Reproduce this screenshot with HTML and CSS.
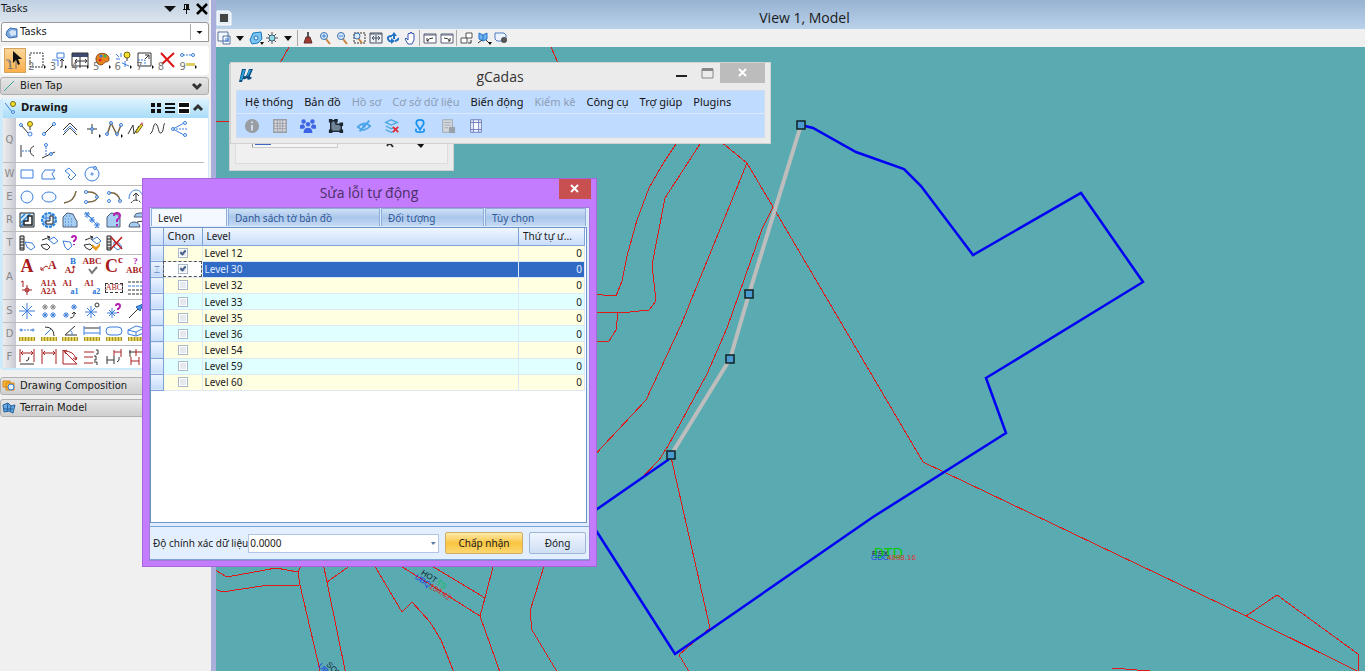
FILE: index.html
```
<!DOCTYPE html>
<html lang="vi">
<head>
<meta charset="utf-8">
<title>View 1, Model</title>
<link rel="stylesheet" href="styles.css">
</head>
<body>
<aside class="tasks">
  <header class="tasks-head"><span>Tasks</span>
    <button aria-label="Menu"><svg class="i12" viewBox="0 0 12 12"><path d="M0 3h12L6 9z"/></svg></button>
    <button aria-label="Pin"><svg class="i12" viewBox="0 0 12 12"><path d="M4 1h5v5h1v1H7v4H6V7H3V6h1zM5 2v4h1V2z"/></svg></button>
    <button aria-label="Close"><svg class="i12" viewBox="0 0 12 12"><path class="x" d="M1 1l10 10M11 1L1 11"/></svg></button>
  </header>
  <div class="combo">
    <svg class="i16" viewBox="0 0 16 16"><path fill="#7ba7dc" stroke="#3f70b5" d="M3 7l3-3 7 1v8l-8 1-3-3z"/><path fill="#d5e5f8" d="M5 8l3-2 4 1v4l-5 1z"/></svg>
    <select aria-label="Tasks"><option>Tasks</option></select>
    <svg class="i16 drop" viewBox="0 0 16 16"><path d="M5 7h6l-3 3z"/></svg>
  </div>
  <div class="main-tools">
    <button class="on" aria-label="Select"><svg viewBox="0 0 20 20"><path fill="#111" d="M8 0v12l3-3 2 5 2-1-2-5h4z"/><path class="g" d="M11 10v8M1 9h4v7"/></svg><i>1</i></button>
    <button aria-label="Fence"><svg viewBox="0 0 20 20"><path class="k" stroke-dasharray="2 1" d="M3 2h13v14H3z"/><path d="M17 14v4l2-2z"/></svg><i>2</i></button>
    <button aria-label="Copy"><svg viewBox="0 0 20 20"><path class="b" d="M9 2h7v5H9zM4 9h6v6"/><path class="k" d="M12 16h2V8m-2 2l2-2 2 2"/><path d="M17 14v4l2-2z"/></svg><i>3</i></button>
    <button aria-label="View"><svg viewBox="0 0 20 20"><path fill="#3c4b70" d="M2 2h16v4H2z"/><path class="k" d="M2 2h16v13H2zM5 10h12M10 5v12M7 8l-2 2 2 2M15 8l2 2-2 2"/><path d="M17 14v4l2-2z"/></svg><i>4</i></button>
    <button aria-label="Colors"><svg viewBox="0 0 20 20"><path fill="#e6831e" stroke="#8b4510" d="M4 8c0-8 13-7 13 0 0 4-4 2-5 4-1 3-8 3-8-4z"/><circle cx="9" cy="5" r="1.5" fill="#2b7ade"/><circle cx="13" cy="5" r="1.5" fill="#3fb54a"/><circle cx="8" cy="9" r="1.5" fill="#d22"/><path d="M17 14v4l2-2z"/></svg><i>5</i></button>
    <button aria-label="Snap"><svg viewBox="0 0 20 20"><path class="b" d="M3 3l3 3M8 2v4M3 8h4M9 12l7 3M12 10v6"/><circle cx="14" cy="4" r="3" fill="#f6df2a" stroke="#776a10"/><path class="k" d="M14 7v3"/><path d="M17 14v4l2-2z"/></svg><i>6</i></button>
    <button aria-label="Scale"><svg viewBox="0 0 20 20"><path class="k" d="M3 2h13v13H3zM10 8l4-4M10 4h4v4"/><path class="b" stroke-dasharray="2 1" d="M3 9h7v6"/><path d="M17 14v4l2-2z"/></svg><i>7</i></button>
    <button aria-label="Delete"><svg viewBox="0 0 20 20"><path stroke="#df1414" stroke-width="2" d="M4 2l13 14M17 2L5 13"/></svg><i>8</i></button>
    <button aria-label="Measure"><svg viewBox="0 0 20 20"><path class="b" stroke-dasharray="2 1" d="M5 4h9"/><circle class="b" cx="4" cy="4" r="1.5"/><circle class="b" cx="15" cy="4" r="1.5"/><path fill="#dfcf62" d="M8 12h9v3H8z"/><path d="M17 14v4l2-2z"/></svg><i>9</i></button>
  </div>
  <button class="group"><svg class="i16" viewBox="0 0 16 16"><path stroke="#3da59b" d="M3 13L13 3"/></svg><span>Bien Tap</span><svg class="i12" viewBox="0 0 12 12"><path class="chev" d="M2 4l4 4 4-4"/></svg></button>
  <section class="drawing">
    <div class="drawing-head"><svg class="i16" viewBox="0 0 16 16"><path class="b" d="M2 3l7 9"/><circle class="b" cx="10" cy="12" r="1.5"/><circle cx="10" cy="4" r="2.5" fill="#f6df2a" stroke="#776a10"/></svg><strong>Drawing</strong>
      <svg class="i12" viewBox="0 0 12 12"><path d="M1 1h4v4H1zM7 1h4v4H7zM1 7h4v4H1zM7 7h4v4H7z"/></svg>
      <svg class="i12" viewBox="0 0 12 12"><path d="M1 1h10v2H1zM1 5h10v2H1zM1 9h10v2H1z"/></svg>
      <svg class="i12 sel" viewBox="0 0 12 12"><path d="M1 1h10v4H1zM1 7h10v4H1z"/></svg>
      <svg class="i12" viewBox="0 0 12 12"><path class="chev" d="M2 8l4-4 4 4"/></svg></div>
    <div class="row"><b>Q</b><div class="grid">
      <button aria-label="Smart line"><svg viewBox="0 0 18 18"><path class="k" d="M3 5l7 8"/><circle class="b" cx="3" cy="5" r="1.5"/><circle class="b" cx="12" cy="14" r="2"/><circle cx="12" cy="4" r="2.5" fill="#f6df2a" stroke="#776a10"/><path class="k" d="M12 7v3"/></svg></button>
      <button aria-label="Line"><svg viewBox="0 0 18 18"><path class="k" d="M5 13l8-8"/><circle class="b" cx="4" cy="14" r="1.5"/><circle class="b" cx="14" cy="4" r="1.5"/></svg></button>
      <button aria-label="Multi-line"><svg viewBox="0 0 18 18"><path class="k" d="M2 10l7-7 7 7M2 15l7-7 7 7"/><path class="b" d="M3 12l6-6 6 6"/></svg></button>
      <button aria-label="Point"><svg viewBox="0 0 18 18"><path class="k" d="M4 9h10M9 4v10"/><circle class="b" cx="9" cy="9" r="1.5"/><path d="M16 14v4l2-2z"/></svg></button>
      <button aria-label="Curve"><svg viewBox="0 0 18 18"><path class="n" d="M2 15l4-12 6 12 4-10"/><circle class="b" cx="2" cy="14" r="1.5"/><circle class="b" cx="6" cy="3" r="1.5"/><circle class="b" cx="12" cy="14" r="1.5"/><circle class="b" cx="16" cy="5" r="1.5"/><path d="M16 14v4l2-2z"/></svg></button>
      <button aria-label="Sketch"><svg viewBox="0 0 18 18"><path class="k" d="M1 14l5-9 1 9 5-8"/><path fill="#f1de33" stroke="#77671b" d="M9 11l5-7 2 1-5 7-2 1z"/><path stroke="#d47a9b" stroke-width="2" d="M14 3l2 1"/></svg></button>
      <button aria-label="Stream curve"><svg viewBox="0 0 18 18"><path class="k" d="M2 14C6 12 5 2 8 4s2 10 5 9 2-9 4-10"/></svg></button>
      <button aria-label="Bisector"><svg viewBox="0 0 18 18"><path class="b" d="M3 9l11-6M3 9l11 6"/><path class="b" stroke-dasharray="2 1" d="M3 9h14"/><circle class="b" cx="3" cy="9" r="1.5"/><circle class="b" cx="15" cy="3" r="1.5"/><circle class="b" cx="15" cy="15" r="1.5"/></svg></button>
      <button aria-label="Minimum line"><svg viewBox="0 0 18 18"><path class="k" d="M3 3v12M16 4c-5 2-5 8 0 10"/><path class="b" stroke-dasharray="2 1" d="M4 9h8"/></svg></button>
      <button aria-label="Angle line"><svg viewBox="0 0 18 18"><path class="k" d="M2 16l13-6"/><path class="b" stroke-dasharray="2 1" d="M6 5v9"/><circle class="b" cx="6" cy="3" r="1.5"/><circle class="b" cx="11" cy="12" r="1.5"/></svg></button>
    </div></div>
    <div class="row"><b>W</b><div class="grid">
      <button aria-label="Block"><svg viewBox="0 0 18 18"><path class="b" d="M3 5h12v8H3z"/></svg></button>
      <button aria-label="Shape"><svg viewBox="0 0 18 18"><path class="b" d="M2 14V9l3-4h10l-3 4 3 5z"/></svg></button>
      <button aria-label="Orthogonal shape"><svg viewBox="0 0 18 18"><path class="b" d="M4 6l4-3 7 7-5 5-3-3 2-2z"/></svg></button>
      <button aria-label="Polygon"><svg viewBox="0 0 18 18"><circle class="b" cx="9" cy="9" r="7"/><circle class="b" cx="9" cy="9" r="1"/><circle class="b" cx="12" cy="3" r="1.5"/></svg></button>
    </div></div>
    <div class="row"><b>E</b><div class="grid">
      <button aria-label="Circle"><svg viewBox="0 0 18 18"><circle class="b" cx="9" cy="9" r="6"/></svg></button>
      <button aria-label="Ellipse"><svg viewBox="0 0 18 18"><ellipse class="b" cx="9" cy="9" rx="7" ry="5"/></svg></button>
      <button aria-label="Arc"><svg viewBox="0 0 18 18"><path class="n" d="M3 15C10 14 14 10 15 3"/></svg></button>
      <button aria-label="Half ellipse"><svg viewBox="0 0 18 18"><path class="n" d="M4 4c14-1 14 11 0 10"/><circle class="b" cx="3" cy="4" r="1.5"/><circle class="b" cx="3" cy="14" r="1.5"/><circle class="b" cx="14" cy="9" r="1.5"/></svg></button>
      <button aria-label="Quarter ellipse"><svg viewBox="0 0 18 18"><path class="n" d="M4 5c7-1 10 3 11 8"/><circle class="b" cx="4" cy="5" r="1.5"/><circle class="b" cx="4" cy="13" r="1.5"/><circle class="b" cx="15" cy="13" r="1.5"/></svg></button>
      <button aria-label="Modify arc"><svg viewBox="0 0 18 18"><path class="b" d="M2 11c0-12 14-12 14 0"/><path class="k" d="M9 13V5M6 8l3-3 3 3"/><path class="k" stroke-dasharray="2 1" d="M4 15c2-4 8-4 10 0"/></svg></button>
    </div></div>
    <div class="row"><b>R</b><div class="grid">
      <button aria-label="Hatch area"><svg viewBox="0 0 18 18"><path fill="#cfe8fb" stroke="#222" d="M2 2h14v14H2z"/><path stroke="#2682d8" stroke-width="1.5" d="M3 7l4-4M3 12l9-9M3 15l3-3"/><path fill="#fff" stroke="#222" stroke-width="1.5" d="M6 14v-4h4V5h4v9z"/></svg></button>
      <button aria-label="Crosshatch area"><svg viewBox="0 0 18 18"><circle cx="9" cy="9" r="7" fill="#b4dcf8" stroke="#2682d8" stroke-dasharray="3 1" stroke-width="2"/><path class="b" d="M3 7h12M3 11h12M6 3v12M11 3v12"/><path fill="#fff" stroke="#222" d="M6 13v-3h4V5h3v8z"/></svg></button>
      <button aria-label="Pattern area"><svg viewBox="0 0 18 18"><path fill="#a6cdf2" stroke="#4e5e78" d="M2 16V6l4-4 6 1 3 6 1 1v6z"/><path class="b" stroke-dasharray="1 2" d="M4 8h9M4 11h9M4 14h9M5 5h6"/></svg></button>
      <button aria-label="Linear pattern"><svg viewBox="0 0 18 18"><path class="b" d="M1 3h6M4 1v6M2 1l4 5M6 1L2 6M6 9h6M9 6v6M7 6l4 5M11 6l-4 5M11 14h6M14 11v6M12 12l4 5M16 12l-4 5M5 4l8 9"/></svg></button>
      <button aria-label="Show pattern"><svg viewBox="0 0 18 18"><path fill="#a6cdf2" stroke="#4e5e78" d="M2 16V6l4-4 6 1 3 4v9z"/><path class="q" d="M9 5q0-3 3-3t3 3q0 2-3 4v2m0 2v2"/></svg></button>
      <button aria-label="Match pattern"><svg viewBox="0 0 18 18"><path fill="#a6cdf2" stroke="#4e5e78" d="M7 6q1-4 5-4h5v4zM2 16q0-5 5-5t6 5z"/><path class="k" d="M10 11l6-1V7"/></svg></button>
    </div></div>
    <div class="row"><b>T</b><div class="grid">
      <button aria-label="Attach tags"><svg viewBox="0 0 18 18"><path fill="#ddd" stroke="#222" d="M2 2h4v14H2zM2 5h4M2 8h4M2 11h4M2 14h4"/><path class="b" d="M7 8l7 1 3 4-4 3-4-3z"/></svg></button>
      <button aria-label="Edit tags"><svg viewBox="0 0 18 18"><path class="k" d="M2 6l8-3M7 2l3 1-2 3M1 11l6-1 3 3-3 3-4-2z"/><path class="b" d="M9 6l5-3 4 4-4 3z"/></svg></button>
      <button aria-label="Review tags"><svg viewBox="0 0 18 18"><path class="b" d="M2 7l7 1 2 4-4 4-3-3z"/><path class="q" d="M11 4q0-2 2-2t2 2q0 2-2 3v1m0 2v1"/></svg></button>
      <button aria-label="Change tags"><svg viewBox="0 0 18 18"><path class="k" d="M2 6l8-3M7 2l3 1-2 3M1 11l6-1 3 3-3 3-4-2z"/><path class="b" d="M9 6l5-3 4 4-4 3z"/><path fill="#e79a20" d="M9 10l4 3 4-4v3l-4 5-4-4z"/></svg></button>
      <button aria-label="Delete tags"><svg viewBox="0 0 18 18"><path fill="#ddd" stroke="#222" d="M2 2h4v14H2zM2 5h4M2 8h4M2 11h4M2 14h4"/><path class="b" d="M9 8l5 1 3 4-4 3-4-3z"/><path stroke="#c31818" stroke-width="1.5" d="M6 3l11 12M17 3L6 15"/></svg></button>
    </div></div>
    <div class="row"><b>A</b><div class="grid">
      <button class="t big">A</button>
      <button class="t" aria-label="Place note"><svg viewBox="0 0 18 18"><path class="r" d="M1 13l5-4 2 1M1 10v3h3"/><text x="8" y="12" class="glyph">A</text></svg></button>
      <button class="t"><span class="stack"><em>B</em>A⤴</span></button>
      <button class="t"><span class="stack">ABC<svg viewBox="0 0 18 9"><path stroke="#777" stroke-width="2" d="M6 3l3 4 5-6"/></svg></span></button>
      <button class="t big">C<sup>c</sup></button>
      <button class="t"><span class="stack"><u>?</u>ABC</span></button>
      <button class="first" aria-label="Text node"><svg viewBox="0 0 18 18"><path class="r" d="M3 3l2-1v6M9 6v10M4 11h10"/><circle class="r" cx="9" cy="11" r="2"/></svg></button>
      <button class="t s"><span class="stack">A1A<br>A2A</span></button>
      <button class="t s"><span class="stack wide">A1<em>a1</em></span></button>
      <button class="t s"><span class="stack wide">A1<em>a2</em></span></button>
      <button class="t s"><span class="box">ABC</span></button>
      <button aria-label="Data fields"><svg viewBox="0 0 18 18"><path class="k" stroke-dasharray="3 1" d="M1 3h16M1 11h16M1 15h16"/><path class="b" stroke-dasharray="3 1" d="M1 7h16"/></svg></button>
    </div></div>
    <div class="row"><b>S</b><div class="grid">
      <button aria-label="Cell"><svg viewBox="0 0 18 18"><path class="b" d="M9 1v16M1 9h16M4 4l10 10M14 4L4 14"/></svg></button>
      <button aria-label="Cell matrix"><svg viewBox="0 0 18 18"><path stroke="#888" d="M5 2v6M2 5h6M3 3l4 4M7 3L3 7M13 2v6M10 5h6M11 3l4 4M15 3l-4 4"/><path class="b" d="M5 10v6M2 13h6M3 11l4 4M7 11l-4 4M13 10v6M10 13h6M11 11l4 4M15 11l-4 4"/></svg></button>
      <button aria-label="Select cell"><svg viewBox="0 0 18 18"><path class="b" d="M13 2v6M10 5h6M11 3l4 4M15 3l-4 4M5 10v6M2 13h6M3 11l4 4M7 11l-4 4"/><path class="k" d="M9 16q5 0 4-6m-2 2l2-2 2 2"/></svg></button>
      <button aria-label="Define origin"><svg viewBox="0 0 18 18"><path class="b" d="M8 4v12M2 10h12M4 6l8 8M12 6l-8 8"/><circle class="k" cx="14" cy="3" r="2"/></svg></button>
      <button aria-label="Identify cell"><svg viewBox="0 0 18 18"><path class="b" d="M7 6v10M2 11h10M4 8l6 6M10 8l-6 6"/><path class="q" d="M11 4q0-2 2-2t2 2q0 2-2 3v1m0 2v1"/></svg></button>
      <button aria-label="Place line terminator"><svg viewBox="0 0 18 18"><path class="k" d="M2 16L13 5"/><path fill="#4d9cf5" stroke="#205da8" d="M9 5l7-3-3 7z"/></svg></button>
    </div></div>
    <div class="row"><b>D</b><div class="grid">
      <button aria-label="Distance"><svg viewBox="0 0 18 18"><path class="b" stroke-dasharray="2 1" d="M3 5h11"/><circle class="b" cx="3" cy="5" r="1"/><circle class="b" cx="15" cy="5" r="1"/><path class="ruler" d="M1 14h16"/><path class="ticks" d="M1 14h16"/></svg></button>
      <button aria-label="Radius"><svg viewBox="0 0 18 18"><path class="k" d="M5 2q9 0 9 9"/><path class="b" d="M5 10l6-6"/><path class="ruler" d="M1 14h16"/><path class="ticks" d="M1 14h16"/></svg></button>
      <button aria-label="Angle"><svg viewBox="0 0 18 18"><path class="k" d="M14 1L4 10h12"/><path class="b" d="M9 5q3 2 2 5"/><path class="ruler" d="M1 14h16"/><path class="ticks" d="M1 14h16"/></svg></button>
      <button aria-label="Length"><svg viewBox="0 0 18 18"><path class="k" d="M1 3h16"/><path class="b" d="M1 1v9M17 1v9M1 8h16"/><path class="ruler" d="M1 14h16"/><path class="ticks" d="M1 14h16"/></svg></button>
      <button aria-label="Area"><svg viewBox="0 0 18 18"><rect class="b" x="1" y="2" width="16" height="8" rx="4"/><path class="ruler" d="M1 14h16"/><path class="ticks" d="M1 14h16"/></svg></button>
      <button aria-label="Volume"><svg viewBox="0 0 18 18"><path class="b" d="M1 5l8-4 8 2v5l-8 3-8-2zM1 5l8 2 8-4M9 7v4"/><path class="ruler" d="M1 14h16"/><path class="ticks" d="M1 14h16"/></svg></button>
    </div></div>
    <div class="row"><b>F</b><div class="grid">
      <button aria-label="Dimension element"><svg viewBox="0 0 18 18"><path class="r" d="M2 1v13M16 1v13M3 5h12M5 3L3 5l2 2M13 3l2 2-2 2"/><path class="k" d="M2 16h14M8 13q3 0 3-4"/></svg></button>
      <button aria-label="Linear dimension"><svg viewBox="0 0 18 18"><path class="r" d="M2 1v15M16 1v15M3 5h12M5 3L3 5l2 2M13 3l2 2-2 2"/></svg></button>
      <button aria-label="Angular dimension"><svg viewBox="0 0 18 18"><path class="r" d="M2 2v14h14M2 2l14 14M3 3q10 0 12 8M6 2L3 3l2 3M12 10l3 2 1-3"/></svg></button>
      <button aria-label="Ordinate dimension"><svg viewBox="0 0 18 18"><path class="r" d="M1 4h10M1 9h9M1 15h9"/><path class="k" d="M13 2h2v4h-2M11 8h2v4h-2M11 14h3v3"/></svg></button>
      <button aria-label="Change dimension"><svg viewBox="0 0 18 18"><path class="k" d="M2 8v8M9 8v8M2 12h7M12 14q3-1 2-5"/><path class="r" d="M9 2v6M16 1v8M9 4h7"/></svg></button>
      <button aria-label="Label line"><svg viewBox="0 0 18 18"><path class="k" d="M3 2v7M2 4h7"/><path class="r" d="M9 1v7M17 1v7M9 4h8M4 9v8M12 9v8M4 13h8"/></svg></button>
    </div></div>
  </section>
  <button class="group"><svg class="i16" viewBox="0 0 16 16"><path fill="#f8b636" stroke="#d98616" d="M2 3h7v6H2zM5 5h8v7H5z"/><circle cx="10" cy="9" r="3" fill="#e8f2ff" stroke="#3478cf"/></svg><span>Drawing Composition</span></button>
  <button class="group"><svg class="i16" viewBox="0 0 16 16"><path fill="#67a9e5" stroke="#24609c" d="M2 5l5-2 3 3 4-1-2 8-4-2-5 1zM2 9l10 0M7 3l-1 9M10 6l-1 6"/></svg><span>Terrain Model</span></button>
</aside>

<main class="view">
  <header class="view-title"><svg class="i16" viewBox="0 0 16 16"><path fill="#e5edf5" stroke="#fff" d="M1 1h12l2 2v12H1z"/><path fill="#444" d="M4 4h8v8H4z"/></svg><h1>View 1, Model</h1></header>
  <nav class="view-tools">
    <button aria-label="View attributes"><svg viewBox="0 0 16 16"><path fill="#f5f9ff" stroke="#55729f" d="M2 2h10v9H2zM7 6h7v8H7z"/><path class="b" d="M9 9h4M9 11h4"/></svg></button>
    <button aria-label="More"><svg viewBox="0 0 16 16"><path d="M4 6h8l-4 5z"/></svg></button>
    <button aria-label="Display style"><svg viewBox="0 0 16 16"><path fill="#7cc4f2" stroke="#1a79bd" d="M2 10l3-7 8-1 1 7-4 4-6 1z"/><circle cx="8" cy="8" r="2" fill="#eef" stroke="#1a79bd"/><path d="M12 12h4l-2 3z"/></svg></button>
    <button aria-label="Brightness"><svg viewBox="0 0 16 16"><path stroke="#555" d="M8 2v12M2 8h12M4 4l8 8M12 4l-8 8"/><circle cx="8" cy="8" r="3" fill="#8fdbe0" stroke="#468"/></svg></button>
    <button aria-label="More"><svg viewBox="0 0 16 16"><path d="M4 6h8l-4 5z"/></svg></button>
    <hr>
    <button aria-label="Update view"><svg viewBox="0 0 16 16"><path stroke="#555" stroke-width="2" d="M8 2v5"/><path fill="#a03b32" stroke="#5e3030" d="M6 7h4l2 6H4z"/></svg></button>
    <button aria-label="Zoom in"><svg viewBox="0 0 16 16"><path stroke="#c9823a" stroke-width="2" d="M9 9l4 5"/><circle cx="7" cy="6" r="3.5" fill="#d9ecfb" stroke="#3b6ea8"/><path class="b" d="M5 6h4M7 4v4"/></svg></button>
    <button aria-label="Zoom out"><svg viewBox="0 0 16 16"><path stroke="#c9823a" stroke-width="2" d="M9 9l4 5"/><circle cx="7" cy="6" r="3.5" fill="#d9ecfb" stroke="#3b6ea8"/><path class="b" d="M5 6h4"/></svg></button>
    <button aria-label="Window area"><svg viewBox="0 0 16 16"><path class="k" stroke-dasharray="2 1" d="M3 3h11v10H3z"/><path stroke="#c9823a" stroke-width="2" d="M7 8l4 5"/><circle cx="6" cy="6" r="3" fill="#d9ecfb" stroke="#3b6ea8"/></svg></button>
    <button aria-label="Fit view"><svg viewBox="0 0 16 16"><path stroke="#46536b" d="M2 3h12v10H2zM2 4h12M4 8h8M8 5v7M6 6L4 8l2 2M10 6l2 2-2 2"/></svg></button>
    <button aria-label="Rotate view"><svg viewBox="0 0 16 16"><path stroke="#2573c5" stroke-width="2" d="M7 6Q2 6 3 9t4 2M10 11q4-1 3-3"/><path fill="#2573c5" d="M6 8l4 3-4 3zM6 6l3-4 3 4h-2v3H8V6z"/></svg></button>
    <button aria-label="Pan view"><svg viewBox="0 0 16 16"><path fill="#fff" stroke="#3658b5" d="M6 14L3 9l1-1 2 2V4l1-1 1 1V3l1-1 1 1v1l1-1 1 1v6l-2 4z"/></svg></button>
    <hr>
    <button aria-label="View previous"><svg viewBox="0 0 16 16"><path fill="#fff" stroke="#576078" d="M2 4h12v9H2zM2 5h12"/><path class="k" d="M5 8v3h2M5 11q2-3 6-3"/></svg></button>
    <button aria-label="View next"><svg viewBox="0 0 16 16"><path fill="#fff" stroke="#576078" d="M2 4h12v9H2zM2 5h12"/><path class="k" d="M11 8v3H9M11 11Q9 8 5 8"/></svg></button>
    <hr>
    <button aria-label="Copy view"><svg viewBox="0 0 16 16"><path fill="#fff" stroke="#555" d="M7 3h6v5H7zM2 8h6v5H2z"/><path class="k" d="M9 13h3v-3"/></svg></button>
    <button aria-label="Clip volume"><svg viewBox="0 0 16 16"><path fill="#6fb2f0" stroke="#2373cc" d="M3 3l4 2 4-2v6l-4 2-4-2zM7 5v6"/><path stroke="#333" d="M2 13l4-3M10 10l4 4"/><path d="M12 12h4l-2 3z"/></svg></button>
    <button aria-label="Clip mask"><svg viewBox="0 0 16 16"><path fill="#eef4ff" stroke="#4e7dc0" d="M2 3h9l2 2v6H4L2 9z"/><circle cx="11" cy="10" r="3" fill="#555"/></svg></button>
  </nav>
  <svg class="map" viewBox="216 47 1149 624" preserveAspectRatio="xMinYMin slice" role="img" aria-label="Bản đồ">
    <g class="parcel">
      <path d="M289 47l-9 16M551 47l7 16M215 121h20"/>
      <path d="M676 144l-12 18-15 26-12 32-10 36-5 25-6 15-26-2M700 144l-35 54-13 67 4 36-7 9-29 3-30-1M618 313l-2 17-7 11h-19"/>
      <path d="M720 141l27 22-66 162-35 75-56 60M747 163l26 44 150 255 323 154 119 59M773 207l-11 22-35 99-20 46-39 72-9 14-19 20"/>
      <path d="M671 457l39 171-31 27 12 20M1246 616l31-21 81 59v20M1112 668l38 3"/>
      <path d="M215 570l12 7 49-9 22 4 5-9M215 589l7 3 40-6 38-1M298 572l2 13 21 90M323 563l4 19 19 93M327 582l24-17"/>
      <path d="M373 563l29 49 10-10 18 20 11 18 14 35M396 563l84 53 21 59M427 563l58 35M494 563l-9 35-5 18M545 563l-15 48 2 19 27 45"/>
    </g>
    <path class="boundary" d="M801 125l12 3 43 24 48 17 17 17 52 69 108-62 62 89-134 82-23 14 20 55-133 84-198 137-85-133M671 455l-3 5-78 54"/>
    <path class="picked" d="M801 125l-52 169-19 65-59 96"/>
    <path class="grips" d="M797 121h8v8h-8zM745 290h8v8h-8zM726 355h8v8h-8zM667 451h8v8h-8z"/>
    <g class="maptext">
      <text x="872" y="556" fill="#123">RSX</text><text class="tall" x="874" y="558" fill="#0c0">DTD</text><text x="871" y="560" fill="#2138e8">GDC</text><text x="887" y="560" fill="#d33">4898.16</text>
      <g transform="translate(417 574) rotate(33)"><text x="3" y="-2" fill="#123">HOT</text><text x="21" y="-2" fill="#1b5">TS</text><text x="0" y="5" fill="#2138e8">UBQ</text><text x="17" y="5" fill="#c33">104.42</text></g>
      <g transform="translate(321 663) rotate(45)"><text x="5" y="-2" fill="#123">SON</text><text x="0" y="5" fill="#2138e8">UBQ</text></g>
    </g>
  </svg>
</main>

<div class="backwin"><div><input aria-label="Level"><svg viewBox="0 0 60 14"><path class="k" stroke-width="2" d="M4 9q3-3 4 0l3 4M5 12l2-3"/><path d="M34 9h9l-4 5z"/></svg></div></div>

<section class="gcadas">
  <header><svg class="logo" viewBox="0 0 16 16"><path fill="#0c4f80" d="M4 1h4L6 8q2 1 3-2l2-5h4l-3 7q0 2 2 1l-1 2q-4 2-4-1-2 2-4 1l-1 3H1z"/><path fill="#29a6df" d="M5 2h2L4 12H2zM11 2h2l-3 6H9z"/></svg><h2>gCadas</h2>
    <button aria-label="Minimize"><svg viewBox="0 0 16 16"><path fill="#222" d="M3 10h11v2H3z"/></svg></button>
    <button aria-label="Maximize"><svg viewBox="0 0 16 16"><path stroke="#888" d="M3 4h11v9H3z"/><path fill="#888" d="M3 3h11v3H3z"/></svg></button>
    <button class="close" aria-label="Close"><svg viewBox="0 0 16 16"><path stroke="#fff" stroke-width="2" d="M4 4l7 7M11 4l-7 7"/></svg></button>
  </header>
  <div class="gbody">
    <nav><button>Hệ thống</button><button>Bản đồ</button><button disabled>Hồ sơ</button><button disabled>Cơ sở dữ liệu</button><button>Biến động</button><button disabled>Kiểm kê</button><button>Công cụ</button><button>Trợ giúp</button><button>Plugins</button></nav>
    <div class="gtools">
      <button aria-label="Thông tin"><svg viewBox="0 0 18 18"><circle cx="9" cy="9" r="8" fill="#999da4"/><path stroke="#d5e3f5" stroke-width="2" d="M9 8v6M9 4v2"/></svg></button>
      <button aria-label="Bảng"><svg viewBox="0 0 18 18"><path fill="#d7dade" stroke="#999da4" stroke-width="1.5" d="M2 2h14v14H2z"/><path stroke="#999da4" d="M2 6h14M2 9h14M2 12h14M6 2v14M9 2v14M12 2v14"/></svg></button>
      <button aria-label="Người dùng"><svg viewBox="0 0 18 18"><g fill="#3e63e4"><circle cx="4" cy="4" r="2.5"/><circle cx="14" cy="4" r="2.5"/><circle cx="9" cy="7" r="2.5"/><path d="M0 12V9q0-2 4-2l2 3-2 2zM18 12V9q0-2-4-2l-2 3 2 2zM4 17q0-6 5-6t5 6z"/></g></svg></button>
      <button aria-label="Thửa đất"><svg viewBox="0 0 18 18"><path fill="#718397" stroke="#1b2632" stroke-width="1.5" d="M3 3h6v4h6v8H3z"/><path fill="#1b2632" d="M1 1h4v4H1zM7 1h4v4H7zM13 5h4v4h-4zM1 13h4v4H1zM13 13h4v4h-4z"/></svg></button>
      <button aria-label="Ẩn"><svg viewBox="0 0 18 18"><path stroke="#4aa3e8" stroke-width="2" d="M2 10q7-7 14-1-7 8-14 1zM4 15L15 3"/><circle cx="9" cy="9" r="2" fill="#4aa3e8"/></svg></button>
      <button aria-label="Xóa lớp"><svg viewBox="0 0 18 18"><path stroke="#4aa9e2" stroke-width="1.5" d="M2 5l6-3 7 3-7 3zM2 9l6 3 3-1M2 13l6 3 3-1"/><path stroke="#e12c37" stroke-width="2" d="M10 10l6 6M16 10l-6 6"/></svg></button>
      <button aria-label="Vị trí"><svg viewBox="0 0 18 18"><path stroke="#1791ee" stroke-width="2" d="M9 13L5 7q-1-5 4-5t4 5zM5 12q-3 4 4 4t4-4"/></svg></button>
      <button aria-label="Báo cáo"><svg viewBox="0 0 18 18"><path fill="#d6d9de" stroke="#9ba1aa" d="M3 2h11v14H3zM5 5h7M5 8h7M5 11h4"/><path fill="#9ba1aa" d="M10 10h7v7h-7z"/></svg></button>
      <button aria-label="Khung"><svg viewBox="0 0 18 18"><path fill="#f7faff" stroke="#6372b6" d="M3 2h12v14H3z"/><path stroke="#6372b6" d="M6 2v14M12 2v14M3 5h12M3 13h12"/></svg></button>
    </div>
  </div>
</section>

<section class="dialog">
  <header><h2>Sửa lỗi tự động</h2><button class="close" aria-label="Đóng"><svg viewBox="0 0 16 16"><path stroke="#fff" stroke-width="2" d="M4 4l7 7M11 4l-7 7"/></svg></button></header>
  <div class="client">
    <div class="tabs" role="tablist"><button role="tab" aria-selected="true">Level</button><button role="tab">Danh sách tờ bản đồ</button><button role="tab">Đối tượng</button><button role="tab">Tùy chọn</button></div>
    <div class="page"><table>
      <colgroup><col class="c1"><col class="c2"><col><col class="c4"></colgroup>
      <thead><tr><th></th><th class="chon">Chọn</th><th>Level</th><th>Thứ tự ư...</th></tr></thead>
      <tbody>
        <tr><td></td><td><input type="checkbox" checked aria-label="Level 12"></td><td>Level 12</td><td>0</td></tr>
        <tr class="current"><td>⌶</td><td><input type="checkbox" checked aria-label="Level 30"></td><td>Level 30</td><td>0</td></tr>
        <tr><td></td><td><input type="checkbox" aria-label="Level 32"></td><td>Level 32</td><td>0</td></tr>
        <tr><td></td><td><input type="checkbox" aria-label="Level 33"></td><td>Level 33</td><td>0</td></tr>
        <tr><td></td><td><input type="checkbox" aria-label="Level 35"></td><td>Level 35</td><td>0</td></tr>
        <tr><td></td><td><input type="checkbox" aria-label="Level 36"></td><td>Level 36</td><td>0</td></tr>
        <tr><td></td><td><input type="checkbox" aria-label="Level 54"></td><td>Level 54</td><td>0</td></tr>
        <tr><td></td><td><input type="checkbox" aria-label="Level 59"></td><td>Level 59</td><td>0</td></tr>
        <tr><td></td><td><input type="checkbox" aria-label="Level 60"></td><td>Level 60</td><td>0</td></tr>
      </tbody>
    </table></div>
    <footer><label for="prec">Độ chính xác dữ liệu</label><div class="prec"><select id="prec"><option>0.0000</option></select><svg viewBox="0 0 10 10"><path fill="#5b7ba8" d="M3 4h5L5 7z"/></svg></div><button class="accept">Chấp nhận</button><button>Đóng</button></footer>
  </div>
</section>
</body>
</html>
```
FILE: styles.css
```
* { box-sizing: border-box; }
body {
  margin: 0;
  height: 100vh;
  display: flex;
  position: relative;
  overflow: hidden;
  background: #f0f0f0;
  font: 11px/16px "Noto Sans", "Open Sans", sans-serif;
  color: #1a1a1a;
}
button, select, input { font: inherit; color: inherit; border: 0; padding: 0; margin: 0; background: none; }
button { display: flex; align-items: center; justify-content: center; }
svg { display: block; fill: #111; flex: none; }
[stroke]:not([fill]), .k, .g, .n, .r, .q, .x, .chev, .ruler, .ticks, .boundary, .picked, .parcel { fill: none; }
h1, h2 { margin: 0; font-weight: 400; }
.i12 { width: 12px; height: 12px; }
.i16 { width: 16px; height: 16px; }
.x { stroke: #000; stroke-width: 2.5; }
.chev { stroke: #333; stroke-width: 3; }
.b { stroke: #3c7fdd; fill: #f4f9ff; fill-opacity: .6; }
path.b { fill-opacity: .2; }
.k { stroke: #333; }
.g { stroke: #777; }
.n { stroke: #776640; stroke-width: 1.5; }
.r { stroke: #a82020; }
.q { stroke: #b41cb4; stroke-width: 2; }
.ruler { stroke: #e3d05a; stroke-width: 4; }
.ticks { stroke: #a8922c; stroke-width: 4; stroke-dasharray: 1 2; }
.glyph { font: bold 12px "Liberation Serif", serif; fill: #a81c1c; }

/* Task panel */
.tasks {
  width: 216px;
  flex: none;
  border-right: 5px solid #aaaedb;
  padding-right: 2px;
  font-family: "DejaVu Sans", sans-serif;
  font-size: 10px;
}
.tasks-head {
  display: flex;
  align-items: center;
  gap: 4px;
  height: 22px;
  padding: 0 1px 4px;
  background: linear-gradient(#c0d0e2, #dde5ee);
}
.tasks-head span { flex: 1; }
.combo {
  display: flex;
  align-items: center;
  height: 20px;
  margin: 0 0 4px 1px;
  padding-left: 2px;
  background: #fff;
  border: 1px solid #999;
  border-radius: 3px 3px 0 0;
}
.combo select { flex: 1; height: 18px; appearance: none; }
.combo .drop { width: 18px; border-left: 1px solid #aaa; }
.main-tools {
  display: grid;
  grid-template-columns: repeat(9, 1fr);
  height: 29px;
  margin: 0 0 2px 1px;
  padding: 2px 10px 2px 3px;
  background: #fff;
  border-radius: 4px;
}
.main-tools button { position: relative; }
.main-tools button.on { background: linear-gradient(#fbd69a, #fcb04a); border: 1px solid #d4a45e; }
.main-tools svg { width: 20px; height: 20px; }
.main-tools i { position: absolute; left: 2px; bottom: 0; color: #777; font-style: normal; line-height: 12px; }
.group {
  width: 100%;
  height: 18px;
  gap: 3px;
  margin-bottom: 4px;
  padding: 0 5px 0 0;
  justify-content: flex-start;
  background: linear-gradient(#e6e6e6, #cfcfcf);
  border: 1px solid #b0b0b0;
  border-radius: 3px;
}
.group span { flex: 1; text-align: left; }
.drawing { margin: -1px 0 7px; background: #fff; border: 1px solid #cdeafb; border-width: 0 1px 2px 3px; border-radius: 4px; }
.drawing-head {
  display: flex;
  align-items: center;
  gap: 2px;
  height: 20px;
  padding-right: 4px;
  background: linear-gradient(#e0f4fd, #a8dcf8);
}
.drawing-head strong { flex: 1; }
.sel { background: #fff; }
.row { display: flex; margin-right: 4px; border-bottom: 1px solid #bbb; }
.row b {
  width: 13px;
  display: flex;
  align-items: center;
  justify-content: center;
  font-weight: 400;
  color: #888;
  background: linear-gradient(90deg, #eee, #c8c8d4);
}
.row:last-child { border-bottom: 0; }
.grid { display: grid; flex: 1; grid-template-columns: repeat(8, 1fr); margin-right: 14px; }
.grid button { height: 22px; }
.grid .first { grid-column: 1; }
.grid svg { width: 18px; height: 18px; }
.t { color: #a81c1c; font: bold 9px/9px "Liberation Serif", serif; }
.t.big { font-size: 18px; }
.t.big sup { font-size: 11px; line-height: 8px; align-self: flex-start; }
.t.s { font-size: 8px; line-height: 8px; }
.stack { display: flex; flex-direction: column; text-align: left; }
.stack.wide { width: 16px; }
.stack em { color: #2873d8; font-style: normal; text-align: right; }
.stack u { color: #b41cb4; text-align: center; text-decoration: none; }
.grid .stack svg { height: 9px; }
.box { border: 1px dashed #333; font-weight: 400; }

/* Model view */
.view { flex: 1; min-width: 0; display: flex; flex-direction: column; }
.view-title {
  display: flex;
  align-items: center;
  height: 29px;
  padding: 6px 0 0;
  background: linear-gradient(#97b3d2, #bad1ea);
}
.view-title h1 { flex: 1; padding-left: 12px; text-align: center; font-family: "Open Sans", sans-serif; font-size: 14px; line-height: 20px; }
.view-tools { display: flex; align-items: center; height: 18px; background: #f0f0f0; }
.view-tools button { width: 17px; }
.view-tools button:nth-child(-n+5) { width: 16px; }
.view-tools svg { width: 16px; height: 16px; }
.view-tools hr { width: 1px; height: 16px; margin: 0 1px; border: 0; background: #aaa; }
.map { flex: 1; width: 100%; min-height: 0; background: #59abb1; }
.parcel { stroke: #e01818; shape-rendering: crispEdges; }
.boundary { stroke: #0000f5; stroke-width: 2.5; }
.picked { stroke: #bdbdbd; stroke-width: 4; }
.grips { fill: #4b9bd0; stroke: #122; stroke-width: 1.5; }
.maptext { font: 8px "Liberation Sans", sans-serif; }
.tall { font-size: 14px; }

/* Floating windows */
.backwin {
  position: absolute;
  left: 229px;
  top: 64px;
  width: 225px;
  height: 107px;
  padding: 5px;
  background: #ebebeb;
  border: 1px solid #d0d0d0;
}
.backwin > div { height: 94px; display: flex; align-items: flex-end; padding: 0 0 15px 16px; border: 1px solid #ddd; background: #f0f0f0; }
.backwin input { width: 86px; height: 16px; border: 1px solid #ccc; border-left-color: #999; background: linear-gradient(#3f66c0, #3f66c0) 2px 0 / 16px 12px no-repeat #f5f5f5; }
.backwin svg { width: 60px; height: 14px; margin-left: 44px; }
.gcadas {
  position: absolute;
  left: 230px;
  top: 62px;
  width: 541px;
  padding: 0 5px 5px;
  background: #ebebeb;
  border: 1px solid #d2d2d2;
}
.gcadas header { display: flex; height: 27px; }
.gcadas h2 { flex: 1; padding: 4px 0 0 78px; text-align: center; font-family: "Open Sans", sans-serif; font-size: 14px; line-height: 20px; color: #333; }
.gcadas .logo { width: 16px; height: 16px; margin: 5px 0 0 2px; }
.gcadas header button { width: 26px; height: 20px; }
.gcadas header svg:not(.logo) { width: 16px; height: 16px; }
.gcadas header button.close { width: 45px; background: #bcbcbc; }
.gbody { background: #bfdbff; border: 1px solid #cddcf0; color: #111; }
.gbody nav { display: flex; gap: 11px; height: 23px; padding-left: 8px; border-bottom: 1px solid #dceaff; }
.gbody nav button:disabled { color: #8d9db4; }
.gtools { display: flex; gap: 10px; height: 23px; padding-left: 6px; align-items: center; }
.gtools svg { width: 18px; height: 16px; }
.gtools button { width: 18px; }

.dialog {
  position: absolute;
  left: 142px;
  top: 178px;
  width: 455px;
  padding: 0 6px 5px;
  background: #c27cfd;
  border: 1px solid #a566dc;
}
.dialog header { display: flex; height: 28px; }
.dialog h2 { flex: 1; padding: 4px 0 0 30px; text-align: center; font-family: "Open Sans", sans-serif; font-size: 14px; line-height: 20px; color: #4b2f66; }
.dialog .close { width: 32px; height: 20px; margin-right: -1px; background: #c85050; }
.dialog .close svg { width: 16px; height: 16px; }
.client { border: 1px solid #a07cd8; background: #dfecfe; font-size: 10px; }
.tabs { display: grid; grid-template-columns: 77px 153px 104px 102px; height: 18px; }
.tabs button {
  justify-content: flex-start;
  padding-left: 6px;
  margin-left: 1px;
  color: #2f5896;
  background: linear-gradient(#cfe1f7, #aac6ea 50%, #c5daf5);
  border: 1px solid #8fadd6;
  border-bottom: 0;
}
.tabs button:first-child { color: #222; background: #f4f9ff; }
.page { height: 296px; margin: 1px 2px 3px 0; padding: 0 1px 0 0; border: 1px solid #6d93cc; background: #fff; }
table { width: 100%; height: 163px; border-collapse: collapse; table-layout: fixed; line-height: 14px; }
.c1 { width: 12px; }
.c2 { width: 39px; }
.c4 { width: 66px; }
th, td { padding: 0 2px; border: 1px solid #dce8f5; border-width: 0 1px 1px 0; text-align: left; font-weight: 400; white-space: nowrap; }
th { height: 17px; padding-left: 4px; background: linear-gradient(#f0f6ff, #c9defb); border-color: #7fa3d6; }
th.chon { font-size: 11px; }
tbody tr { background: #ffffe1; }
tbody tr:nth-child(even) { background: #e0ffff; }
tbody tr.current { background: #316ac5; color: #e0ecff; }
td:first-child { padding: 0; text-align: center; background: linear-gradient(#eef5ff, #c5dbfa); border-color: #7fa3d6; color: #7898c8; }
td:nth-child(2) { text-align: center; }
td:last-child { text-align: right; }
.current td:nth-child(2) { background: #fff; outline: 1px dashed #555; outline-offset: -1px; }
table input { display: flex; justify-content: center; width: 10px; height: 10px; margin: 0 auto; appearance: none; background: #e6e9ee; border: 1px solid #aab8cc; box-shadow: inset 0 0 0 1px #fff; }
table input:checked::before { content: ""; box-sizing: content-box; width: 2px; height: 4px; border: solid #46608c; border-width: 0 2px 2px 0; transform: rotate(40deg); }
footer { display: flex; align-items: center; height: 34px; padding: 0 3px; border-top: 1px solid #7da3da; border-bottom: 1px solid #7da3da; background: #e3efff; }
footer label { white-space: nowrap; }
.prec { flex: 1; display: flex; align-items: center; height: 19px; margin-right: 6px; background: #fff; border: 1px solid #b0c6e4; }
.prec select { flex: 1; height: 17px; padding-left: 1px; appearance: none; }
.prec svg { width: 10px; height: 10px; }
footer button { width: 57px; height: 22px; background: linear-gradient(#eef5ff, #cfdff4); border: 1px solid #9fb5d6; border-radius: 2px; }
footer .accept { width: 78px; margin-right: 6px; background: linear-gradient(#fdeaae, #f8c53f 50%, #fbd772); border-color: #cfae62; }
```
